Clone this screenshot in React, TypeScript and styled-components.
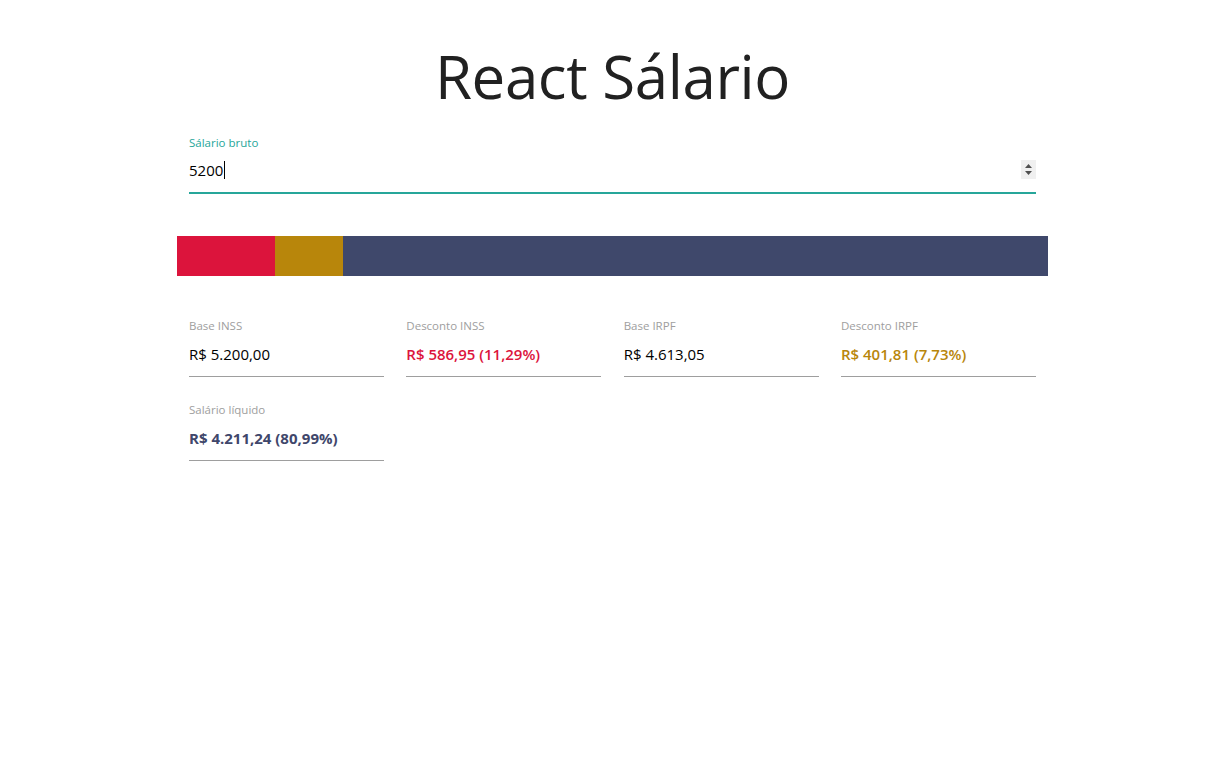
import React from "react";
import styled, { createGlobalStyle } from "styled-components";

const Global = createGlobalStyle`
  html, body { margin: 0; padding: 0; background: #fff; }
  body { font-family: "Open Sans", "Noto Sans", sans-serif; color: rgba(0,0,0,0.87); }
  * { box-sizing: border-box; }
`;

const Container = styled.div`
  width: 871px;
  margin-left: calc(50% - 432.5px);
  padding-top: 31px;
`;

const Title = styled.h1`
  margin: 0;
  text-align: center;
  font-weight: 400;
  font-size: 60px;
  line-height: 90px;
  color: #212121;
  letter-spacing: -0.4px;
`;

const Field = styled.div`
  padding: 0 12px;
  margin-top: 14px;
`;

const InputLabel = styled.label`
  display: block;
  font-size: 11.5px;
  line-height: 16px;
  color: #26a69a;
`;

const InputRow = styled.div`
  display: flex;
  align-items: center;
  height: 43px;
  padding-bottom: 4px;
  border-bottom: 2px solid #26a69a;
`;

const InputText = styled.span`
  flex: 1;
  font-size: 15px;
  color: #000;
  display: flex;
  align-items: center;
`;

const Caret = styled.span`
  display: inline-block;
  width: 1px;
  height: 18px;
  background: #000;
  margin-left: 1px;
`;

const Spinner = styled.div`
  width: 15px;
  height: 19px;
  background: #f0f0f0;
  display: flex;
  align-items: center;
  justify-content: center;
`;

const Bar = styled.div`
  display: flex;
  height: 40px;
  margin-top: 42px;
`;

const Segment = styled.div<{ $color: string }>`
  background: ${(p) => p.$color};
  height: 100%;
`;

const Grid = styled.div`
  display: grid;
  grid-template-columns: repeat(4, 195px);
  justify-content: space-between;
  padding: 0 12px;
  margin-top: 42px;
  row-gap: 25px;
`;

const Cell = styled.div``;

const CellLabel = styled.div`
  font-size: 11.5px;
  line-height: 16px;
  color: #9e9e9e;
`;

const CellValue = styled.div<{ $color?: string; $weight?: number }>`
  height: 43px;
  padding-top: 9px;
  font-size: 15px;
  line-height: 22px;
  color: ${(p) => p.$color || "#000"};
  font-weight: ${(p) => p.$weight || 400};
  border-bottom: 1px solid #9e9e9e;
`;

const items = [
  { label: "Base INSS", value: "R$ 5.200,00" },
  { label: "Desconto INSS", value: "R$ 586,95 (11,29%)", color: "#dc143c", weight: 600 },
  { label: "Base IRPF", value: "R$ 4.613,05" },
  { label: "Desconto IRPF", value: "R$ 401,81 (7,73%)", color: "#b8860b", weight: 600 },
  { label: "Salário líquido", value: "R$ 4.211,24 (80,99%)", color: "#3f476b", weight: 700 },
];

export default function App() {
  return (
    <>
      <Global />
      <Container>
        <Title>React Sálario</Title>
        <Field>
          <InputLabel>Sálario bruto</InputLabel>
          <InputRow>
            <InputText>
              5200
              <Caret />
            </InputText>
            <Spinner>
              <svg width="9" height="13" viewBox="0 0 9 13">
                <path d="M4.5 1 L8 5 L1 5 Z" fill="#505050" />
                <path d="M4.5 12 L8 8 L1 8 Z" fill="#505050" />
              </svg>
            </Spinner>
          </InputRow>
        </Field>
        <Bar>
          <Segment $color="#dc143c" style={{ width: "11.29%" }} />
          <Segment $color="#b8860b" style={{ width: "7.73%" }} />
          <Segment $color="#3f486b" style={{ width: "80.98%" }} />
        </Bar>
        <Grid>
          {items.map((it) => (
            <Cell key={it.label}>
              <CellLabel>{it.label}</CellLabel>
              <CellValue $color={it.color} $weight={it.weight}>
                {it.value}
              </CellValue>
            </Cell>
          ))}
        </Grid>
      </Container>
    </>
  );
}
